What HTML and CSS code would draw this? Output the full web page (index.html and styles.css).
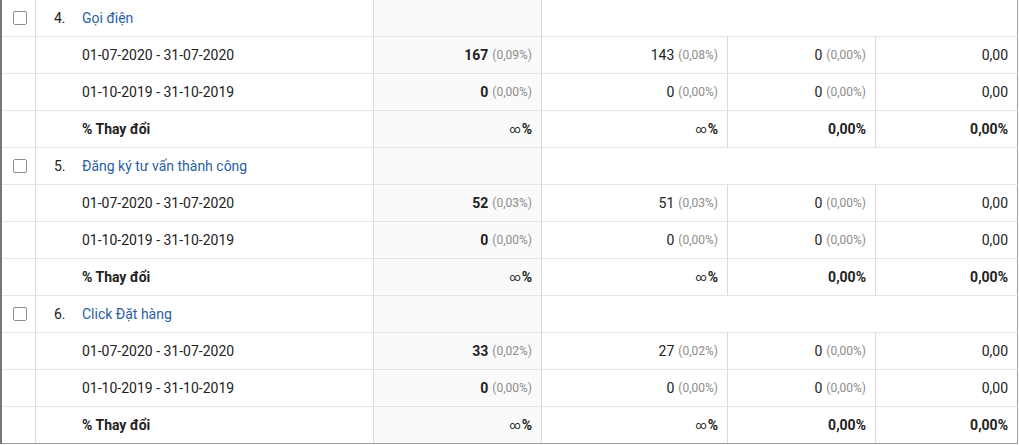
FILE: index.html
```html
<!DOCTYPE html>
<html lang="vi">
<head>
<meta charset="utf-8">
<title>Mục tiêu</title>
<link rel="stylesheet" href="styles.css">
</head>
<body>
<div class="table">
  <div class="row head">
    <div class="c chk"><span class="box"></span></div>
    <div class="c name"><span class="idx">4.</span><a class="link">Gọi điện</a></div>
    <div class="c num prim"></div>
    <div class="c rest"></div>
  </div>
  <div class="row">
    <div class="c chk"></div>
    <div class="c name"><span class="idx"></span>01-07-2020 - 31-07-2020</div>
    <div class="c num prim"><b>167</b><span class="pct">(0,09%)</span></div>
    <div class="c num">143<span class="pct">(0,08%)</span></div>
    <div class="c num">0<span class="pct">(0,00%)</span></div>
    <div class="c num last">0,00</div>
  </div>
  <div class="row">
    <div class="c chk"></div>
    <div class="c name"><span class="idx"></span>01-10-2019 - 31-10-2019</div>
    <div class="c num prim"><b>0</b><span class="pct">(0,00%)</span></div>
    <div class="c num">0<span class="pct">(0,00%)</span></div>
    <div class="c num">0<span class="pct">(0,00%)</span></div>
    <div class="c num last">0,00</div>
  </div>
  <div class="row">
    <div class="c chk"></div>
    <div class="c name bold"><span class="idx"></span>% Thay đổi</div>
    <div class="c num prim bold"><span class="inf">∞</span>%</div>
    <div class="c num bold"><span class="inf">∞</span>%</div>
    <div class="c num bold">0,00%</div>
    <div class="c num last bold">0,00%</div>
  </div>

  <div class="row head">
    <div class="c chk"><span class="box"></span></div>
    <div class="c name"><span class="idx">5.</span><a class="link">Đăng ký tư vấn thành công</a></div>
    <div class="c num prim"></div>
    <div class="c rest"></div>
  </div>
  <div class="row">
    <div class="c chk"></div>
    <div class="c name"><span class="idx"></span>01-07-2020 - 31-07-2020</div>
    <div class="c num prim"><b>52</b><span class="pct">(0,03%)</span></div>
    <div class="c num">51<span class="pct">(0,03%)</span></div>
    <div class="c num">0<span class="pct">(0,00%)</span></div>
    <div class="c num last">0,00</div>
  </div>
  <div class="row">
    <div class="c chk"></div>
    <div class="c name"><span class="idx"></span>01-10-2019 - 31-10-2019</div>
    <div class="c num prim"><b>0</b><span class="pct">(0,00%)</span></div>
    <div class="c num">0<span class="pct">(0,00%)</span></div>
    <div class="c num">0<span class="pct">(0,00%)</span></div>
    <div class="c num last">0,00</div>
  </div>
  <div class="row">
    <div class="c chk"></div>
    <div class="c name bold"><span class="idx"></span>% Thay đổi</div>
    <div class="c num prim bold"><span class="inf">∞</span>%</div>
    <div class="c num bold"><span class="inf">∞</span>%</div>
    <div class="c num bold">0,00%</div>
    <div class="c num last bold">0,00%</div>
  </div>

  <div class="row head">
    <div class="c chk"><span class="box"></span></div>
    <div class="c name"><span class="idx">6.</span><a class="link">Click Đặt hàng</a></div>
    <div class="c num prim"></div>
    <div class="c rest"></div>
  </div>
  <div class="row">
    <div class="c chk"></div>
    <div class="c name"><span class="idx"></span>01-07-2020 - 31-07-2020</div>
    <div class="c num prim"><b>33</b><span class="pct">(0,02%)</span></div>
    <div class="c num">27<span class="pct">(0,02%)</span></div>
    <div class="c num">0<span class="pct">(0,00%)</span></div>
    <div class="c num last">0,00</div>
  </div>
  <div class="row">
    <div class="c chk"></div>
    <div class="c name"><span class="idx"></span>01-10-2019 - 31-10-2019</div>
    <div class="c num prim"><b>0</b><span class="pct">(0,00%)</span></div>
    <div class="c num">0<span class="pct">(0,00%)</span></div>
    <div class="c num">0<span class="pct">(0,00%)</span></div>
    <div class="c num last">0,00</div>
  </div>
  <div class="row endrow">
    <div class="c chk"></div>
    <div class="c name bold"><span class="idx"></span>% Thay đổi</div>
    <div class="c num prim bold"><span class="inf">∞</span>%</div>
    <div class="c num bold"><span class="inf">∞</span>%</div>
    <div class="c num bold">0,00%</div>
    <div class="c num last bold">0,00%</div>
  </div>
</div>
</body>
</html>
```

FILE: styles.css
```css
html, body {
  margin: 0;
  padding: 0;
  background: #ffffff;
}

body {
  font-family: Roboto, "Noto Sans", Arial, sans-serif;
  font-size: 14px;
  color: #222222;
}

.table {
  width: 1018px;
  border-left: 2px solid #777777;
  box-sizing: border-box;
  width: 1018px;
}

.row {
  display: grid;
  grid-template-columns: 34px 338px 168px 186px 148px 142px;
  height: 37px;
  box-sizing: border-box;
  border-bottom: 1px solid #e5e5e5;
}

.row.endrow {
  border-bottom: 1px solid #9e9e9e;
}

.row.head {
  grid-template-columns: 34px 338px 168px 476px;
}

.c {
  display: flex;
  align-items: center;
  box-sizing: border-box;
  border-right: 1px solid #dadada;
  height: 36px;
  white-space: nowrap;
}

.c.last,
.c.rest {
  border-right: 1px solid #9e9e9e;
}

.chk {
  padding-left: 11px;
}

.box {
  display: block;
  width: 14px;
  height: 14px;
  box-sizing: border-box;
  border: 1px solid #8e8e8e;
  border-radius: 2px;
  background: #ffffff;
}

.name {
  padding-left: 18px;
}

.idx {
  display: inline-block;
  width: 28px;
}

.link {
  color: #2a5fa3;
  text-decoration: none;
}

.num {
  justify-content: flex-end;
  padding-right: 9px;
}

.prim {
  background: #fafafa;
}

.bold {
  font-weight: 700;
}

b {
  font-weight: 700;
}

.pct {
  margin-left: 4px;
  font-size: 12px;
  color: #8c8c8c;
  font-weight: 400;
}

.inf {
  font-size: 11px;
  font-weight: 400;
  margin-right: 1px;
}
```
